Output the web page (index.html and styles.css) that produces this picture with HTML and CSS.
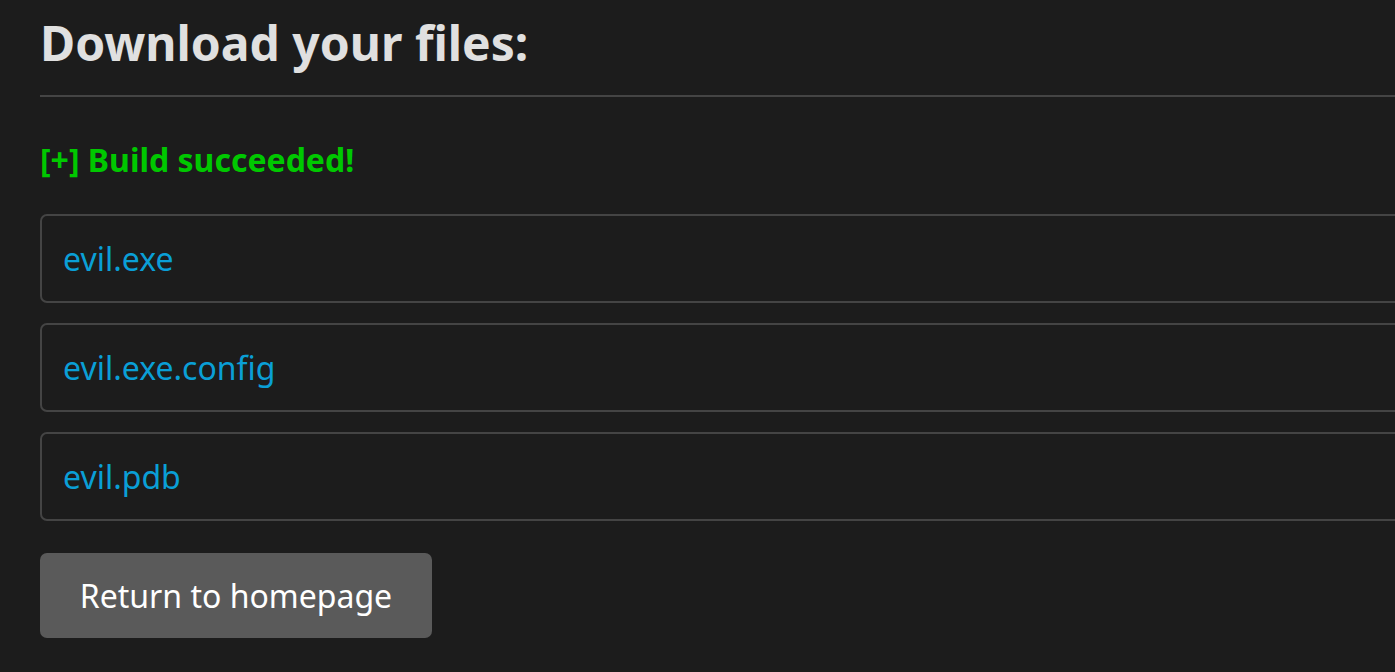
FILE: index.html
```html
<!DOCTYPE html>
<html>
<head>
<meta charset="utf-8">
<link rel="stylesheet" href="styles.css">
</head>
<body>
<main class="page">
  <h1 class="title">Download your files:</h1>
  <hr class="rule">
  <p class="status">[+] Build succeeded!</p>
  <ul class="files">
    <li class="file"><a class="file-link" href="#">evil.exe</a></li>
    <li class="file"><a class="file-link" href="#">evil.exe.config</a></li>
    <li class="file"><a class="file-link" href="#">evil.pdb</a></li>
  </ul>
  <button class="home-btn">Return to homepage</button>
</main>
</body>
</html>
```
FILE: styles.css
```css
html, body {
  margin: 0;
  padding: 0;
  background: #1c1c1c;
  overflow: hidden;
  height: 100%;
}
.page {
  font-family: "Noto Sans", "Open Sans", sans-serif;
  padding: 10px 0 0 40px;
  width: 1400px;
}
.title {
  margin: 0;
  font-size: 48px;
  line-height: 66px;
  font-weight: 700;
  color: #e0e0e0;
}
.rule {
  margin: 19px 0 0 0;
  border: 0;
  height: 2px;
  background: #444;
}
.status {
  margin: 43px 0 0 0;
  font-size: 32px;
  line-height: 40px;
  font-weight: 700;
  color: #00c800;
}
.files {
  list-style: none;
  margin: 34px 0 0 0;
  padding: 0;
  display: flex;
  flex-direction: column;
  gap: 20px;
}
.file {
  height: 89px;
  box-sizing: border-box;
  border: 2px solid #444;
  border-radius: 7px;
  display: flex;
  align-items: center;
  padding: 0 21px;
}
.file-link {
  font-size: 32px;
  color: #0a9fd6;
  text-decoration: none;
}
.home-btn {
  margin-top: 32px;
  width: 392px;
  height: 85px;
  border: 0;
  border-radius: 7px;
  background: #5a5a5a;
  color: #fff;
  font-family: "Noto Sans", "Open Sans", sans-serif;
  font-size: 32px;
  padding: 0;
}
```
